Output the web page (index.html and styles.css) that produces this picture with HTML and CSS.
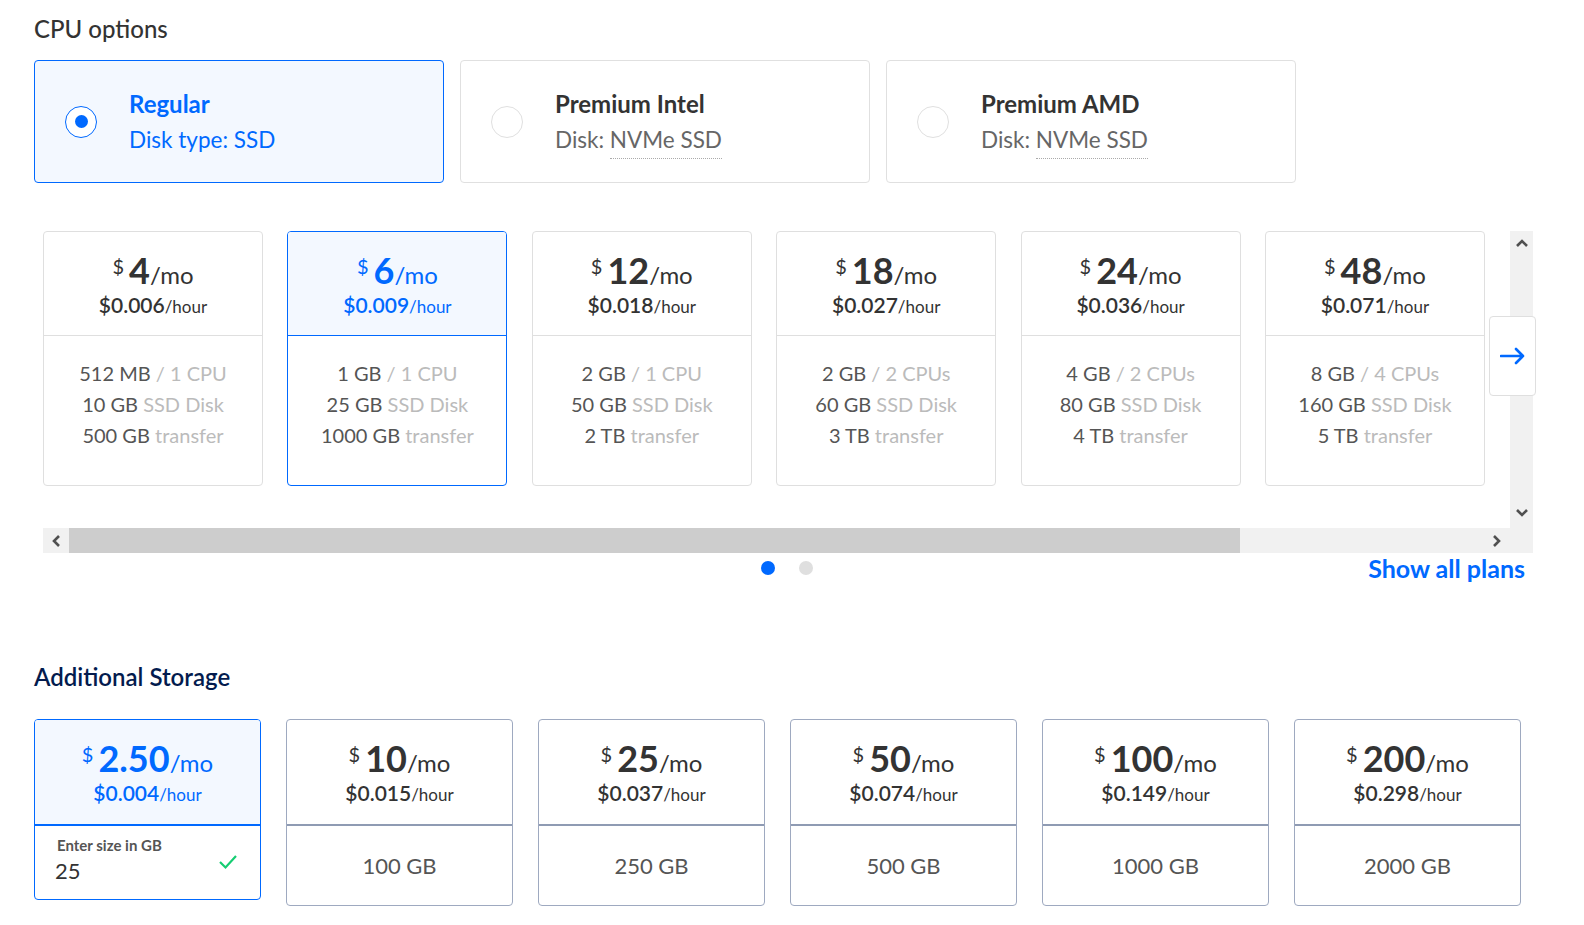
FILE: index.html
```html
<!DOCTYPE html>
<html>
<head>
<meta charset="utf-8">
<link rel="stylesheet" href="styles.css">
</head>
<body>
<div class="page">
  <h2 class="section-title">CPU options</h2>
  <div class="cpu-options">
    <div class="cpu-card selected">
      <span class="radio"><span class="radio-dot"></span></span>
      <div class="cpu-text">
        <div class="cpu-title">Regular</div>
        <div class="cpu-sub">Disk type: SSD</div>
      </div>
    </div>
    <div class="cpu-card">
      <span class="radio"></span>
      <div class="cpu-text">
        <div class="cpu-title">Premium Intel</div>
        <div class="cpu-sub">Disk: <span class="dotted">NVMe SSD</span></div>
      </div>
    </div>
    <div class="cpu-card">
      <span class="radio"></span>
      <div class="cpu-text">
        <div class="cpu-title">Premium AMD</div>
        <div class="cpu-sub">Disk: <span class="dotted">NVMe SSD</span></div>
      </div>
    </div>
  </div>

  <div class="plans">
    <div class="plans-viewport">
      <div class="plans-track">
        <div class="plan-card">
          <div class="plan-head">
            <div class="price"><span class="cur">$</span><span class="amt">4</span><span class="per">/mo</span></div>
            <div class="hour"><span class="hamt">$0.006</span>/hour</div>
          </div>
          <div class="plan-body">
            <div><b>512 MB</b> / 1 CPU</div>
            <div><b>10 GB</b> SSD Disk</div>
            <div><b>500 GB</b> transfer</div>
          </div>
        </div>
        <div class="plan-card selected">
          <div class="plan-head">
            <div class="price"><span class="cur">$</span><span class="amt">6</span><span class="per">/mo</span></div>
            <div class="hour"><span class="hamt">$0.009</span>/hour</div>
          </div>
          <div class="plan-body">
            <div><b>1 GB</b> / 1 CPU</div>
            <div><b>25 GB</b> SSD Disk</div>
            <div><b>1000 GB</b> transfer</div>
          </div>
        </div>
        <div class="plan-card">
          <div class="plan-head">
            <div class="price"><span class="cur">$</span><span class="amt">12</span><span class="per">/mo</span></div>
            <div class="hour"><span class="hamt">$0.018</span>/hour</div>
          </div>
          <div class="plan-body">
            <div><b>2 GB</b> / 1 CPU</div>
            <div><b>50 GB</b> SSD Disk</div>
            <div><b>2 TB</b> transfer</div>
          </div>
        </div>
        <div class="plan-card">
          <div class="plan-head">
            <div class="price"><span class="cur">$</span><span class="amt">18</span><span class="per">/mo</span></div>
            <div class="hour"><span class="hamt">$0.027</span>/hour</div>
          </div>
          <div class="plan-body">
            <div><b>2 GB</b> / 2 CPUs</div>
            <div><b>60 GB</b> SSD Disk</div>
            <div><b>3 TB</b> transfer</div>
          </div>
        </div>
        <div class="plan-card">
          <div class="plan-head">
            <div class="price"><span class="cur">$</span><span class="amt">24</span><span class="per">/mo</span></div>
            <div class="hour"><span class="hamt">$0.036</span>/hour</div>
          </div>
          <div class="plan-body">
            <div><b>4 GB</b> / 2 CPUs</div>
            <div><b>80 GB</b> SSD Disk</div>
            <div><b>4 TB</b> transfer</div>
          </div>
        </div>
        <div class="plan-card">
          <div class="plan-head">
            <div class="price"><span class="cur">$</span><span class="amt">48</span><span class="per">/mo</span></div>
            <div class="hour"><span class="hamt">$0.071</span>/hour</div>
          </div>
          <div class="plan-body">
            <div><b>8 GB</b> / 4 CPUs</div>
            <div><b>160 GB</b> SSD Disk</div>
            <div><b>5 TB</b> transfer</div>
          </div>
        </div>
      </div>
      <div class="vscroll">
        <svg class="chev" width="14" height="10" viewBox="0 0 14 10"><polyline points="2,8 7,3 12,8" fill="none" stroke="#505050" stroke-width="2.6"/></svg>
        <svg class="chev" width="14" height="10" viewBox="0 0 14 10"><polyline points="2,2 7,7 12,2" fill="none" stroke="#505050" stroke-width="2.6"/></svg>
      </div>
      <div class="hscroll">
        <div class="hbtn"><svg width="10" height="14" viewBox="0 0 10 14"><polyline points="8,2 3,7 8,12" fill="none" stroke="#505050" stroke-width="2.6"/></svg></div>
        <div class="hthumb"></div>
        <div class="htrack"></div>
        <div class="hbtn"><svg width="10" height="14" viewBox="0 0 10 14"><polyline points="2,2 7,7 2,12" fill="none" stroke="#505050" stroke-width="2.6"/></svg></div>
        <div class="hcorner"></div>
      </div>
      <button class="next-btn" type="button">
        <svg width="26" height="18" viewBox="0 0 26 18"><path d="M1 9 H23 M16 2 L23 9 L16 16" fill="none" stroke="#0069ff" stroke-width="2.6" stroke-linecap="round" stroke-linejoin="round"/></svg>
      </button>
    </div>
    <div class="plans-footer">
      <span></span>
      <div class="dots"><span class="dot active"></span><span class="dot"></span></div>
      <a class="show-all" href="#">Show all plans</a>
    </div>
  </div>

  <h2 class="section-title storage-title">Additional Storage</h2>
  <div class="storage-row">
    <div class="store-card selected">
      <div class="store-head">
        <div class="price"><span class="cur">$</span><span class="amt">2.50</span><span class="per">/mo</span></div>
        <div class="hour"><span class="hamt">$0.004</span>/hour</div>
      </div>
      <div class="store-input">
        <div class="input-label">Enter size in GB</div>
        <div class="input-row">
          <span class="input-val">25</span>
          <svg width="20" height="16" viewBox="0 0 20 16"><polyline points="2,8 7.5,13.5 18,2" fill="none" stroke="#15cd72" stroke-width="2.2"/></svg>
        </div>
      </div>
    </div>
    <div class="store-card">
      <div class="store-head">
        <div class="price"><span class="cur">$</span><span class="amt">10</span><span class="per">/mo</span></div>
        <div class="hour"><span class="hamt">$0.015</span>/hour</div>
      </div>
      <div class="store-body">100 GB</div>
    </div>
    <div class="store-card">
      <div class="store-head">
        <div class="price"><span class="cur">$</span><span class="amt">25</span><span class="per">/mo</span></div>
        <div class="hour"><span class="hamt">$0.037</span>/hour</div>
      </div>
      <div class="store-body">250 GB</div>
    </div>
    <div class="store-card">
      <div class="store-head">
        <div class="price"><span class="cur">$</span><span class="amt">50</span><span class="per">/mo</span></div>
        <div class="hour"><span class="hamt">$0.074</span>/hour</div>
      </div>
      <div class="store-body">500 GB</div>
    </div>
    <div class="store-card">
      <div class="store-head">
        <div class="price"><span class="cur">$</span><span class="amt">100</span><span class="per">/mo</span></div>
        <div class="hour"><span class="hamt">$0.149</span>/hour</div>
      </div>
      <div class="store-body">1000 GB</div>
    </div>
    <div class="store-card">
      <div class="store-head">
        <div class="price"><span class="cur">$</span><span class="amt">200</span><span class="per">/mo</span></div>
        <div class="hour"><span class="hamt">$0.298</span>/hour</div>
      </div>
      <div class="store-body">2000 GB</div>
    </div>
  </div>
</div>
</body>
</html>
```

FILE: styles.css
```css
* { box-sizing: border-box; }
html, body { margin: 0; padding: 0; background: #fff; }
body {
  font-family: Lato, "Open Sans", sans-serif;
  color: #333;
  width: 1584px;
  height: 925px;
  overflow: hidden;
}
.page { padding: 16px 0 0 34px; }

.section-title {
  margin: 0;
  font-size: 24px;
  line-height: 26px;
  font-weight: 500;
  color: #333;
}

/* CPU options */
.cpu-options { display: flex; gap: 16px; margin-top: 18px; }
.cpu-card {
  width: 410px;
  height: 123px;
  border: 1px solid #e0e0e0;
  border-radius: 4px;
  display: flex;
  align-items: center;
  padding-left: 30px;
  gap: 32px;
  background: #fff;
}
.cpu-card.selected { border-color: #0069ff; background: #f3f8ff; }
.radio {
  width: 32px; height: 32px;
  border-radius: 50%;
  border: 1.5px solid #e0e0e0;
  background: #fff;
  display: flex; align-items: center; justify-content: center;
  flex-shrink: 0;
}
.selected .radio { border-color: #0069ff; }
.radio-dot { width: 13px; height: 13px; border-radius: 50%; background: #0069ff; }
.cpu-title { font-size: 24px; line-height: 26px; font-weight: 700; color: #333; }
.cpu-sub { font-size: 22.5px; line-height: 26px; color: #666; margin-top: 10px; }
.selected .cpu-title, .selected .cpu-sub { color: #0069ff; }
.dotted { border-bottom: 1px dotted #aaa; padding-bottom: 5px; }

/* Plans */
.plans { margin: 48px 0 0 9px; width: 1490px; }
.plans-viewport {
  position: relative;
  display: grid;
  grid-template-columns: 1fr 23px;
  grid-template-rows: 297px 25px;
}
.plans-track {
  display: flex;
  gap: 24.4px;
  overflow: hidden;
  align-items: flex-start;
}
.plan-card {
  flex: 0 0 220px;
  height: 255px;
  border: 1px solid #dfdfdf;
  border-radius: 4px;
  text-align: center;
  overflow: hidden;
}
.plan-card.selected { border-color: #0069ff; }
.plan-head {
  height: 104px;
  border-bottom: 1px solid #dfdfdf;
  padding-top: 20px;
}
.plan-card.selected .plan-head { background: #f3f8ff; border-bottom-color: #0069ff; }
.price {
  display: flex;
  justify-content: center;
  align-items: baseline;
  height: 38px;
  color: #333;
  white-space: nowrap;
}
.price > span { line-height: 1; }
.cur { font-size: 20px; position: relative; top: -10px; margin-right: 5px; }
.amt { font-size: 36px; font-weight: 700; }
.per { font-size: 24px; }
.hour { font-size: 17px; line-height: 24px; color: #333; margin-top: 3px; }
.hamt { font-size: 21px; font-weight: 600; }
.selected .price, .selected .hour { color: #0069ff; }
.plan-body {
  padding-top: 22px;
  font-size: 20px;
  line-height: 31px;
  color: #bbb;
}
.plan-body b { font-weight: 400; color: #555; }

.vscroll {
  background: #f1f1f1;
  display: flex;
  flex-direction: column;
  justify-content: space-between;
  align-items: center;
  padding: 7px 0 10px;
}
.hscroll {
  grid-column: 1 / span 2;
  display: flex;
  background: #f1f1f1;
}
.hbtn { width: 26px; display: flex; align-items: center; justify-content: center; }
.hthumb { width: 1171px; background: #cdcdcd; }
.htrack { flex: 1; }
.hcorner { width: 23px; }
.next-btn {
  position: absolute;
  left: 1446px;
  top: 85px;
  width: 47px;
  height: 80px;
  background: #fff;
  border: 1px solid #dfdfdf;
  border-radius: 4px;
  padding: 0;
  display: flex; align-items: center; justify-content: center;
}
.plans-footer {
  display: grid;
  grid-template-columns: 1fr auto 1fr;
  align-items: center;
  height: 30px;
  padding-right: 8px;
}
.dots { display: flex; gap: 24px; margin-left: 5px; }
.dot { width: 14px; height: 14px; border-radius: 50%; background: #dfdfdf; }
.dot.active { background: #0069ff; }
.show-all {
  justify-self: end;
  font-size: 25px;
  line-height: 30px;
  font-weight: 700;
  color: #0069ff;
  text-decoration: none;
}

/* Storage */
.storage-title { margin-top: 81px; color: #031b4e; font-weight: 600; font-size: 24px; }
.storage-row { display: flex; gap: 25px; margin-top: 29px; align-items: flex-start; }
.store-card {
  flex: 0 0 227px;
  height: 187px;
  border: 1px solid #9ea9c0;
  border-radius: 4px;
  text-align: center;
  overflow: hidden;
}
.store-card.selected { height: 181px; border-color: #0069ff; }
.store-head {
  height: 106px;
  border-bottom: 2px solid #8f9bb3;
  padding-top: 20px;
}
.store-card.selected .store-head { background: #f3f8ff; border-bottom-color: #0069ff; }
.store-body {
  height: 79px;
  display: flex; align-items: center; justify-content: center;
  font-size: 22px;
  color: #555;
}
.store-input { text-align: left; padding: 10px 22px 0 20px; }
.input-label { font-size: 15px; line-height: 18px; font-weight: 700; color: #555; padding-left: 2px; }
.input-row { display: flex; align-items: center; justify-content: space-between; margin-top: 4px; }
.input-val { font-size: 22px; line-height: 26px; color: #333; }
.input-row svg { margin-top: -18px; }
```
